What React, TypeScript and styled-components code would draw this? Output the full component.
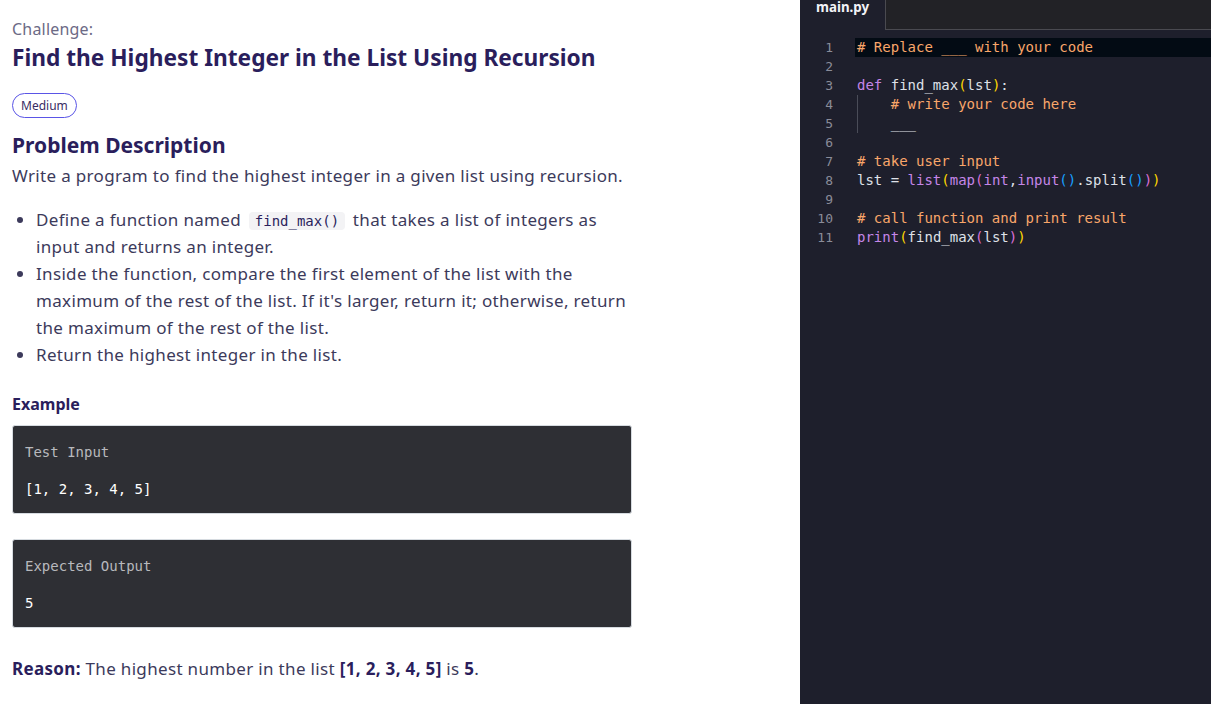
import styled, { createGlobalStyle } from 'styled-components';

const GlobalStyle = createGlobalStyle`
  html, body {
    margin: 0;
    padding: 0;
    background: #fff;
  }
  #root {
    height: 704px;
  }
`;

const Page = styled.div`
  display: grid;
  grid-template-columns: 800px 1fr;
  height: 704px;
  overflow: hidden;
`;

const Problem = styled.section`
  padding: 18px 12px 0 12px;
  font-family: 'Noto Sans', 'Lato', sans-serif;
  color: #3c3a5b;
  overflow: hidden;
`;

const Kicker = styled.div`
  font-size: 16px;
  line-height: 22px;
  color: #6c6a85;
  letter-spacing: 0.2px;
`;

const Title = styled.h1`
  margin: 1px 0 0;
  font-size: 22.7px;
  line-height: 34px;
  font-weight: 700;
  color: #2a1e5c;
`;

const Badge = styled.span`
  display: inline-block;
  margin-top: 18px;
  padding: 0 8px;
  height: 23px;
  line-height: 23px;
  font-size: 12px;
  color: #3a2d63;
  border: 1px solid #5a55e6;
  border-radius: 13px;
`;

const SectionTitle = styled.h2`
  margin: 12px 0 0;
  font-size: 21px;
  line-height: 30px;
  font-weight: 700;
  color: #2a1e5c;
`;

const Para = styled.p`
  margin: 2px 0 0;
  font-size: 17px;
  line-height: 27px;
  letter-spacing: 0.33px;
`;

const Bullets = styled.ul`
  margin: 17px 0 0;
  padding-left: 24px;
  width: 590px;
  font-size: 17px;
  line-height: 27px;
  letter-spacing: 0.33px;
  li::marker {
    color: #3c3a5b;
  }
`;

const InlineCode = styled.code`
  font-family: 'DejaVu Sans Mono', monospace;
  font-size: 14px;
  line-height: 18px;
  letter-spacing: 0;
  padding: 1px 6px;
  margin: 0 3px;
  background: #f3f3f5;
  border-radius: 4px;
  color: #2a1e5c;
`;

const SubTitle = styled.h3`
  margin: 25px 0 0;
  font-size: 16px;
  line-height: 22px;
  font-weight: 700;
  color: #2a1e5c;
`;

const IOBox = styled.div<{ $gap: number }>`
  margin-top: ${(p) => p.$gap}px;
  width: 620px;
  height: 89px;
  box-sizing: border-box;
  padding: 17px 12px 0;
  background: #2e2f34;
  border: 1px solid #d6dbe0;
  border-radius: 3px;
  font-family: 'DejaVu Sans Mono', monospace;
  font-size: 14px;
`;

const IOLabel = styled.div`
  color: #b8b9bd;
  line-height: 18px;
`;

const IOValue = styled.div`
  color: #ffffff;
  line-height: 18px;
  margin-top: 19px;
`;

const Reason = styled.p`
  margin: 29px 0 0;
  font-size: 17px;
  line-height: 24px;
  letter-spacing: 0.33px;
  b {
    color: #2a1e5c;
  }
`;

const Editor = styled.section`
  display: flex;
  flex-direction: column;
  background: #1e1f2c;
`;

const TabBar = styled.div`
  display: flex;
  height: 30px;
  background: #222226;
`;

const Tab = styled.div`
  width: 85px;
  box-sizing: border-box;
  padding: 0 0 0 16px;
  height: 30px;
  line-height: 14px;
  background: #1e1f2c;
  color: #f2f2f7;
  font-family: 'Noto Sans', 'Lato', sans-serif;
  font-size: 13.3px;
  font-weight: 700;
`;

const TabRest = styled.div`
  flex: 1;
  border-left: 1px solid #4a4a50;
  border-bottom: 1px solid #4a4a50;
`;

const Code = styled.div`
  padding-top: 8px;
  font-family: 'DejaVu Sans Mono', monospace;
  font-size: 14px;
`;

const Line = styled.div`
  display: flex;
  height: 19px;
  line-height: 19px;
  white-space: pre;
`;

const LineNo = styled.span`
  width: 33px;
  text-align: right;
  font-size: 13px;
  color: #8a8c99;
  flex-shrink: 0;
`;

const LineText = styled.span<{ $active?: boolean }>`
  flex: 1;
  margin-left: 22px;
  padding-left: 2px;
  color: #dfe1e8;
  background: ${(p) => (p.$active ? '#030b14' : 'transparent')};
  position: relative;
`;

const Guide = styled.span`
  position: absolute;
  left: 2px;
  top: 0;
  bottom: 0;
  width: 1px;
  background: #4a4c58;
`;

const Cm = styled.span`
  color: #f9a66a;
`;
const Kw = styled.span`
  color: #c586e8;
`;
const B = styled.span<{ $lvl: 1 | 2 | 3 }>`
  color: ${(p) => (p.$lvl === 1 ? '#ffd700' : p.$lvl === 2 ? '#da70d6' : '#179fff')};
`;

export default function App() {
  return (
    <>
      <GlobalStyle />
      <Page>
        <Problem>
          <Kicker>Challenge:</Kicker>
          <Title>Find the Highest Integer in the List Using Recursion</Title>
          <Badge>Medium</Badge>
          <SectionTitle>Problem Description</SectionTitle>
          <Para>Write a program to find the highest integer in a given list using recursion.</Para>
          <Bullets>
            <li>
              Define a function named <InlineCode>find_max()</InlineCode> that takes a list of integers as
              input and returns an integer.
            </li>
            <li>
              Inside the function, compare the first element of the list with the maximum of the rest of the
              list. If it's larger, return it; otherwise, return the maximum of the rest of the list.
            </li>
            <li>Return the highest integer in the list.</li>
          </Bullets>
          <SubTitle>Example</SubTitle>
          <IOBox $gap={10}>
            <IOLabel>Test Input</IOLabel>
            <IOValue>[1, 2, 3, 4, 5]</IOValue>
          </IOBox>
          <IOBox $gap={25}>
            <IOLabel>Expected Output</IOLabel>
            <IOValue>5</IOValue>
          </IOBox>
          <Reason>
            <b>Reason:</b> The highest number in the list <b>[1, 2, 3, 4, 5]</b> is <b>5</b>.
          </Reason>
        </Problem>

        <Editor>
          <TabBar>
            <Tab>main.py</Tab>
            <TabRest />
          </TabBar>
          <Code>
            <Line>
              <LineNo>1</LineNo>
              <LineText $active>
                <Cm># Replace ___ with your code</Cm>
              </LineText>
            </Line>
            <Line>
              <LineNo>2</LineNo>
              <LineText />
            </Line>
            <Line>
              <LineNo>3</LineNo>
              <LineText>
                <Kw>def</Kw> find_max<B $lvl={1}>(</B>lst<B $lvl={1}>)</B>:
              </LineText>
            </Line>
            <Line>
              <LineNo>4</LineNo>
              <LineText>
                <Guide />
                {'    '}
                <Cm># write your code here</Cm>
              </LineText>
            </Line>
            <Line>
              <LineNo>5</LineNo>
              <LineText>
                <Guide />
                {'    ___'}
              </LineText>
            </Line>
            <Line>
              <LineNo>6</LineNo>
              <LineText />
            </Line>
            <Line>
              <LineNo>7</LineNo>
              <LineText>
                <Cm># take user input</Cm>
              </LineText>
            </Line>
            <Line>
              <LineNo>8</LineNo>
              <LineText>
                lst = <Kw>list</Kw>
                <B $lvl={1}>(</B>
                <Kw>map</Kw>
                <B $lvl={2}>(</B>
                <Kw>int</Kw>,<Kw>input</Kw>
                <B $lvl={3}>()</B>.split<B $lvl={3}>()</B>
                <B $lvl={2}>)</B>
                <B $lvl={1}>)</B>
              </LineText>
            </Line>
            <Line>
              <LineNo>9</LineNo>
              <LineText />
            </Line>
            <Line>
              <LineNo>10</LineNo>
              <LineText>
                <Cm># call function and print result</Cm>
              </LineText>
            </Line>
            <Line>
              <LineNo>11</LineNo>
              <LineText>
                <Kw>print</Kw>
                <B $lvl={1}>(</B>find_max<B $lvl={2}>(</B>lst<B $lvl={2}>)</B>
                <B $lvl={1}>)</B>
              </LineText>
            </Line>
          </Code>
        </Editor>
      </Page>
    </>
  );
}
